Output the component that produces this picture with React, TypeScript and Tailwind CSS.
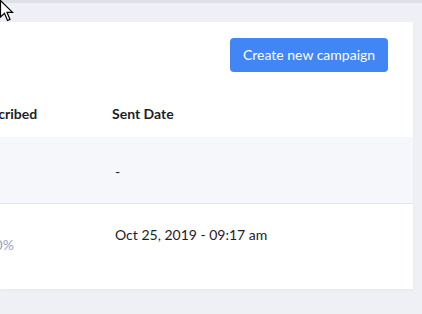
import React from 'react';

function Cursor() {
  return (
    <svg className="absolute left-0 top-0" width="16" height="24" viewBox="0 0 16 24">
      <path d="M0.5 0.5 L0.5 17 L4.5 13.2 L7.5 20.5 L10 19.4 L7 12.3 L12.5 12.3 Z" fill="#fff" stroke="#000" strokeWidth="1.2" strokeLinejoin="miter" />
    </svg>
  );
}

export default function App() {
  return (
    <div className="relative w-[422px] h-[314px] overflow-hidden bg-[#eef0f5] text-[#1d2127]" style={{ fontFamily: 'Lato, "Noto Sans", sans-serif' }}>
      <div className="h-[3px] bg-[#dde0e6]" />
      <div className="pt-[19px] pr-[9px]">
        <div className="w-[413px] h-[267px] bg-white overflow-hidden shadow-[0_1px_3px_rgba(0,0,0,0.04)]">
          <div className="flex justify-end pt-4 pr-[25px]">
            <button className="h-[34px] w-[158px] rounded bg-[#4285f4] text-white text-[14px] leading-none">
              Create new campaign
            </button>
          </div>

          <div className="ml-[-48px] mt-[18px]">
            <div className="flex h-[47px] items-center text-[14px] font-bold">
              <div className="w-[160px]">Unsubscribed</div>
              <div>Sent Date</div>
            </div>
            <div className="flex h-[67px] items-center bg-[#f6f7fb] border-b border-[#e3e5eb] text-[14px]">
              <div className="w-[163px]" />
              <div className="pt-[2px]">-</div>
            </div>
            <div className="flex h-[85px] text-[14px]">
              <div className="w-[163px] pl-[23px] pt-[30px] text-[#9a9ec0]">0.00%</div>
              <div className="pt-[20px]">Oct 25, 2019 - 09:17 am</div>
            </div>
          </div>
        </div>
      </div>
      <Cursor />
    </div>
  );
}
